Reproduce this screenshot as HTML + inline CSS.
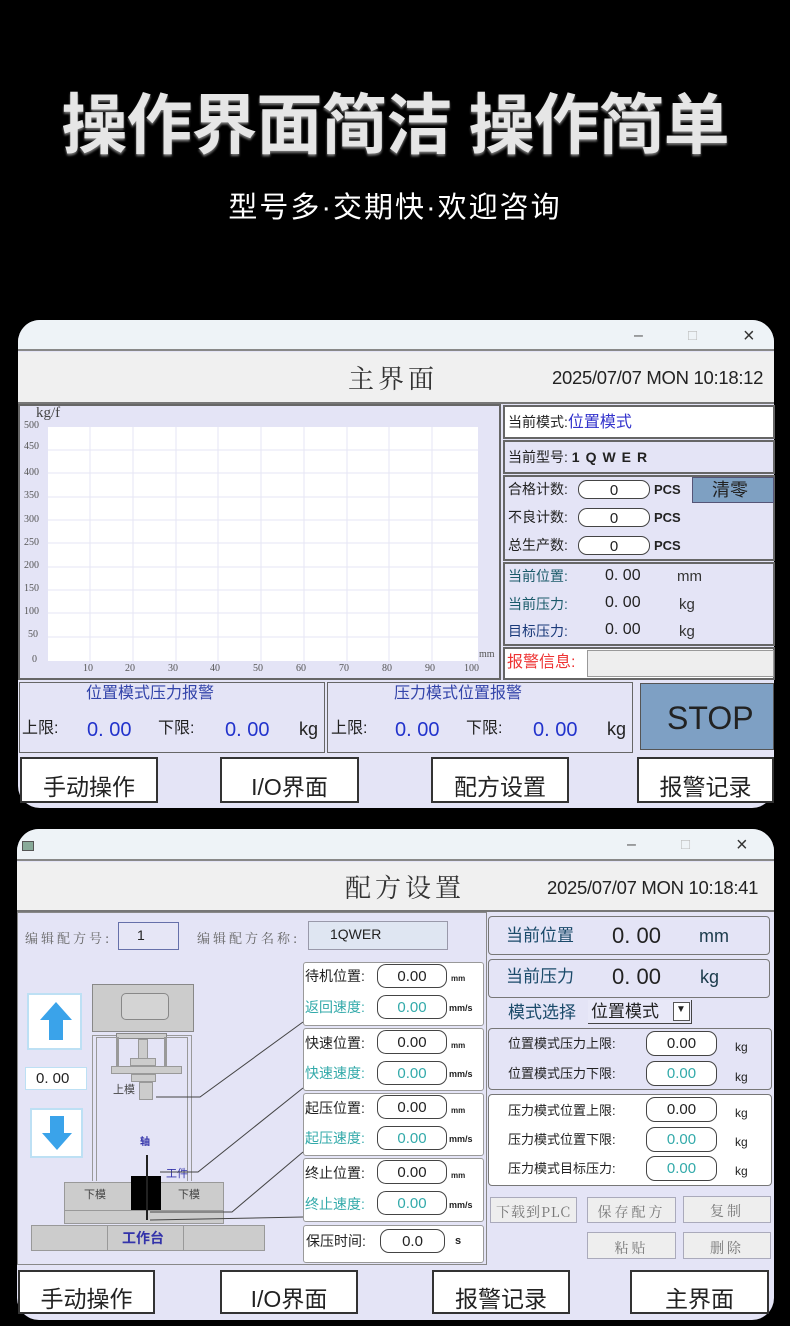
<!DOCTYPE html>
<html><head><meta charset="utf-8"><style>
*{margin:0;padding:0;box-sizing:border-box}
body{width:790px;height:1326px;background:#000;position:relative;overflow:hidden;font-family:"Liberation Sans","Noto Sans CJK SC",sans-serif;color:#222}
.a{position:absolute}
.t{position:absolute;white-space:nowrap;line-height:1}
.box{position:absolute;border:2px solid #666;background:#e4e4f6}
.inp{position:absolute;background:#fff;border:1.5px solid #444;border-radius:9px;text-align:center;font-size:15px;line-height:1}
.btn{position:absolute;background:#fff;border:2px solid #333;text-align:center;font-size:23px}
.gb{position:absolute;background:#eeeeee;border:1.5px solid #aab;text-align:center;font-size:14px;color:#777;font-family:"Noto Serif CJK SC",serif;letter-spacing:3px}
</style></head><body>

<div class="t" style="left:0;width:790px;text-align:center;top:92px;font-size:66px;font-weight:bold;color:#e6e6e6;letter-spacing:-1px;text-shadow:0 2px 2px #777">操作界面简洁 操作简单</div>
<div class="t" style="left:0;width:790px;text-align:center;top:194px;font-size:29px;letter-spacing:2px;color:#fff">型号多·交期快·欢迎咨询</div>

<!-- PANEL 1 -->
<div class="a" style="left:18px;top:320px;width:756px;height:488px;background:#e4e4f6;border-radius:22px 22px 22px 22px;overflow:hidden">
  <div class="a" style="left:0;top:0;width:756px;height:31px;background:#eef3f7;border-bottom:2px solid #888"></div>
  <div class="t" style="left:616px;top:8px;font-size:16px;color:#555">–</div>
  <div class="t" style="left:670px;top:8px;font-size:15px;color:#bbb">□</div>
  <div class="t" style="left:725px;top:6px;font-size:20px;color:#333">×</div>
  <div class="a" style="left:0;top:32px;width:756px;height:52px;background:#f0f0f0;border-bottom:2px solid #777"></div>
  <div class="t" style="left:330px;top:45px;font-size:26px;letter-spacing:4px;font-family:'Noto Serif CJK SC',serif;color:#333">主界面</div>
  <div class="t" style="left:534px;top:49px;font-size:18.5px;letter-spacing:-0.3px;color:#222">2025/07/07 MON 10:18:12</div>
</div>

<!-- chart -->
<div class="box" style="left:18px;top:404px;width:483px;height:276px"></div>
<svg class="a" style="left:48px;top:427px" width="430" height="234">
<rect width="430" height="234" fill="#fff"/>
<g stroke="#e6e6f4" stroke-width="1">
<line x1="42" y1="0" x2="42" y2="234"/><line x1="85" y1="0" x2="85" y2="234"/><line x1="128" y1="0" x2="128" y2="234"/><line x1="170" y1="0" x2="170" y2="234"/><line x1="213" y1="0" x2="213" y2="234"/><line x1="256" y1="0" x2="256" y2="234"/><line x1="299" y1="0" x2="299" y2="234"/><line x1="341" y1="0" x2="341" y2="234"/><line x1="384" y1="0" x2="384" y2="234"/>
<line x1="0" y1="23" x2="430" y2="23"/><line x1="0" y1="46" x2="430" y2="46"/><line x1="0" y1="70" x2="430" y2="70"/><line x1="0" y1="93" x2="430" y2="93"/><line x1="0" y1="116" x2="430" y2="116"/><line x1="0" y1="140" x2="430" y2="140"/><line x1="0" y1="163" x2="430" y2="163"/><line x1="0" y1="186" x2="430" y2="186"/><line x1="0" y1="210" x2="430" y2="210"/>
</g></svg>
<div class="t" style="left:36px;top:406px;font-size:15px;font-family:'Liberation Serif',serif;color:#444">kg/f</div>
<div style="font-family:'Liberation Serif',serif;font-size:10px;color:#555">
<div class="t" style="left:24px;top:421px">500</div><div class="t" style="left:24px;top:442px">450</div><div class="t" style="left:24px;top:468px">400</div><div class="t" style="left:24px;top:491px">350</div><div class="t" style="left:24px;top:515px">300</div><div class="t" style="left:24px;top:538px">250</div><div class="t" style="left:24px;top:561px">200</div><div class="t" style="left:24px;top:584px">150</div><div class="t" style="left:24px;top:607px">100</div><div class="t" style="left:28px;top:630px">50</div><div class="t" style="left:32px;top:655px">0</div>
<div class="t" style="left:83px;top:664px">10</div><div class="t" style="left:125px;top:664px">20</div><div class="t" style="left:168px;top:664px">30</div><div class="t" style="left:210px;top:664px">40</div><div class="t" style="left:253px;top:664px">50</div><div class="t" style="left:296px;top:664px">60</div><div class="t" style="left:339px;top:664px">70</div><div class="t" style="left:382px;top:664px">80</div><div class="t" style="left:425px;top:664px">90</div><div class="t" style="left:464px;top:664px">100</div><div class="t" style="left:479px;top:650px">mm</div>
</div>

<!-- right column p1 -->
<div class="box" style="left:503px;top:405px;width:272px;height:34px;background:#fff"></div>
<div class="t" style="left:508px;top:415px;font-size:14px">当前模式:<span style="color:#3333cc;font-size:16px">位置模式</span></div>
<div class="box" style="left:503px;top:440px;width:272px;height:34px"></div>
<div class="t" style="left:508px;top:450px;font-size:14px">当前型号: <b style="letter-spacing:6px;font-size:14px">1QWER</b></div>
<div class="box" style="left:503px;top:475px;width:272px;height:86px"></div>
<div class="t" style="left:508px;top:482px;font-size:14px">合格计数:</div><div class="inp" style="left:578px;top:480px;width:72px;height:19px;padding-top:2px">0</div><div class="t" style="left:654px;top:483px;font-size:13px;font-weight:bold">PCS</div>
<div class="t" style="left:508px;top:510px;font-size:14px">不良计数:</div><div class="inp" style="left:578px;top:508px;width:72px;height:19px;padding-top:2px">0</div><div class="t" style="left:654px;top:511px;font-size:13px;font-weight:bold">PCS</div>
<div class="t" style="left:508px;top:538px;font-size:14px">总生产数:</div><div class="inp" style="left:578px;top:536px;width:72px;height:19px;padding-top:2px">0</div><div class="t" style="left:654px;top:539px;font-size:13px;font-weight:bold">PCS</div>
<div class="a" style="left:692px;top:477px;width:82px;height:26px;background:#7ea0c2;border:1px solid #557"></div>
<div class="t" style="left:712px;top:481px;font-size:18px">清零</div>
<div class="box" style="left:503px;top:562px;width:272px;height:84px"></div>
<div class="t" style="left:508px;top:569px;font-size:14px;color:#1a5a6a">当前位置:</div><div class="t" style="left:605px;top:568px;font-size:16px">0. 00</div><div class="t" style="left:677px;top:569px;font-size:15px;color:#333">mm</div>
<div class="t" style="left:508px;top:597px;font-size:14px;color:#1a5a6a">当前压力:</div><div class="t" style="left:605px;top:595px;font-size:16px">0. 00</div><div class="t" style="left:679px;top:597px;font-size:15px;color:#333">kg</div>
<div class="t" style="left:508px;top:624px;font-size:14px;color:#1a3a7a">目标压力:</div><div class="t" style="left:605px;top:622px;font-size:16px">0. 00</div><div class="t" style="left:679px;top:624px;font-size:15px;color:#333">kg</div>
<div class="box" style="left:503px;top:647px;width:272px;height:33px;background:#fff"></div>
<div class="t" style="left:507px;top:655px;font-size:16px;color:#e33">报警信息:</div>
<div class="a" style="left:587px;top:650px;width:187px;height:27px;background:#eee;border:1px solid #999"></div>

<!-- alarms -->
<div class="box" style="left:19px;top:682px;width:306px;height:71px;border-width:1.5px"></div>
<div class="t" style="left:86px;top:686px;font-size:16px;color:#3344aa">位置模式压力报警</div>
<div class="t" style="left:22px;top:721px;font-size:16px">上限:</div><div class="t" style="left:87px;top:720px;font-size:20px;color:#2233cc">0. 00</div>
<div class="t" style="left:158px;top:721px;font-size:16px">下限:</div><div class="t" style="left:225px;top:720px;font-size:20px;color:#2233cc">0. 00</div><div class="t" style="left:299px;top:720px;font-size:18px">kg</div>
<div class="box" style="left:327px;top:682px;width:306px;height:71px;border-width:1.5px"></div>
<div class="t" style="left:394px;top:686px;font-size:16px;color:#3344aa">压力模式位置报警</div>
<div class="t" style="left:331px;top:721px;font-size:16px">上限:</div><div class="t" style="left:395px;top:720px;font-size:20px;color:#2233cc">0. 00</div>
<div class="t" style="left:466px;top:721px;font-size:16px">下限:</div><div class="t" style="left:533px;top:720px;font-size:20px;color:#2233cc">0. 00</div><div class="t" style="left:607px;top:720px;font-size:18px">kg</div>
<div class="a" style="left:640px;top:683px;width:134px;height:67px;background:#7ea0c4;border:1px solid #555"></div>
<div class="t" style="left:667px;top:702px;font-size:32px">STOP</div>

<div class="btn" style="left:20px;top:757px;width:138px;height:46px;padding-top:9px">手动操作</div>
<div class="btn" style="left:220px;top:757px;width:139px;height:46px;padding-top:9px">I/O界面</div>
<div class="btn" style="left:431px;top:757px;width:138px;height:46px;padding-top:9px">配方设置</div>
<div class="btn" style="left:637px;top:757px;width:137px;height:46px;padding-top:9px">报警记录</div>

<!-- PANEL 2 -->
<div class="a" style="left:17px;top:829px;width:757px;height:491px;background:#e4e4f6;border-radius:22px;overflow:hidden">
  <div class="a" style="left:0;top:0;width:757px;height:32px;background:#eef3f7;border-bottom:2px solid #888"></div>
  <div class="a" style="left:5px;top:12px;width:12px;height:10px;background:#8a9;border:1px solid #555"></div>
  <div class="t" style="left:610px;top:8px;font-size:16px;color:#555">–</div>
  <div class="t" style="left:664px;top:8px;font-size:15px;color:#bbb">□</div>
  <div class="t" style="left:719px;top:6px;font-size:20px;color:#333">×</div>
  <div class="a" style="left:0;top:33px;width:757px;height:50px;background:#f0f0f0;border-bottom:2px solid #777"></div>
  <div class="t" style="left:328px;top:45px;font-size:26px;letter-spacing:4px;font-family:'Noto Serif CJK SC',serif;color:#333">配方设置</div>
  <div class="t" style="left:530px;top:50px;font-size:18.5px;letter-spacing:-0.3px;color:#222">2025/07/07 MON 10:18:41</div>
</div>
<div class="a" style="left:17px;top:912px;width:470px;height:353px;border:1.5px solid #888"></div>
<div class="t" style="left:25px;top:931px;font-size:13px;color:#666;letter-spacing:3px;font-family:'Noto Serif CJK SC',serif">编辑配方号:</div>
<div class="a" style="left:118px;top:922px;width:61px;height:28px;border:1.5px solid #6670aa;background:#e6e6f6"></div><div class="t" style="left:137px;top:928px;font-size:14px">1</div>
<div class="t" style="left:197px;top:931px;font-size:13px;color:#666;letter-spacing:3px;font-family:'Noto Serif CJK SC',serif">编辑配方名称:</div>
<div class="a" style="left:308px;top:921px;width:140px;height:29px;border:1.5px solid #99a;background:#dfe6f2"></div><div class="t" style="left:330px;top:927px;font-size:14px">1QWER</div>

<!-- machine -->
<div class="a" style="left:27px;top:993px;width:55px;height:57px;background:#fff;border:2px solid #bde0f4"></div>
<svg class="a" style="left:38px;top:1000px" width="36" height="42"><path d="M18 2 L34 20 L25 20 L25 40 L11 40 L11 20 L2 20 Z" fill="#3aa3ea"/></svg>
<div class="a" style="left:25px;top:1067px;width:62px;height:23px;background:#fff;border:1.5px solid #bde0f4"></div><div class="t" style="left:36px;top:1071px;font-size:15px">0. 00</div>
<div class="a" style="left:30px;top:1108px;width:53px;height:50px;background:#fff;border:2px solid #bde0f4"></div>
<svg class="a" style="left:40px;top:1114px" width="34" height="38"><path d="M17 36 L32 19 L24 19 L24 2 L10 2 L10 19 L2 19 Z" fill="#3aa3ea"/></svg>
<div class="a" style="left:92px;top:984px;width:102px;height:48px;background:#ccc;border:1px solid #888"></div>
<div class="a" style="left:121px;top:993px;width:48px;height:27px;background:#d4d4d4;border:1px solid #888;border-radius:5px"></div>
<div class="a" style="left:92px;top:1035px;width:100px;height:146px;border:1px solid #999;border-bottom:none"></div>
<div class="a" style="left:96px;top:1037px;width:92px;height:144px;border:1px solid #999;border-bottom:none"></div>
<div class="a" style="left:116px;top:1033px;width:51px;height:6px;background:#ccc;border:1px solid #888"></div>
<div class="a" style="left:116px;top:1037px;width:3px;height:30px;background:#999"></div>
<div class="a" style="left:164px;top:1037px;width:3px;height:30px;background:#999"></div>
<div class="a" style="left:138px;top:1039px;width:10px;height:20px;background:#ccc;border:1px solid #999"></div>
<div class="a" style="left:130px;top:1058px;width:26px;height:8px;background:#ccc;border:1px solid #999"></div>
<div class="a" style="left:111px;top:1066px;width:71px;height:8px;background:#ccc;border:1px solid #999"></div>
<div class="a" style="left:131px;top:1074px;width:25px;height:8px;background:#ccc;border:1px solid #999"></div>
<div class="a" style="left:139px;top:1082px;width:14px;height:18px;background:#ccc;border:1px solid #999"></div>
<div class="t" style="left:113px;top:1085px;font-size:11px;color:#444">上模</div>
<div class="t" style="left:140px;top:1138px;font-size:10px;color:#33a;font-weight:bold">轴</div>
<div class="t" style="left:166px;top:1169px;font-size:11px;color:#33a">工件</div>
<div class="a" style="left:64px;top:1182px;width:160px;height:42px;background:#ccc;border:1px solid #999"></div>
<div class="a" style="left:64px;top:1210px;width:160px;height:1px;background:#999"></div>
<div class="t" style="left:84px;top:1190px;font-size:11px;color:#444">下模</div>
<div class="t" style="left:178px;top:1190px;font-size:11px;color:#444">下模</div>
<div class="a" style="left:131px;top:1176px;width:30px;height:34px;background:#000"></div>
<div class="a" style="left:146px;top:1155px;width:2px;height:65px;background:#222"></div>
<div class="a" style="left:31px;top:1225px;width:234px;height:26px;background:#ccc;border:1px solid #999"></div>
<div class="a" style="left:107px;top:1225px;width:77px;height:26px;border-left:1px solid #999;border-right:1px solid #999"></div>
<div class="t" style="left:122px;top:1231px;font-size:14px;color:#33a;font-weight:bold">工作台</div>
<svg class="a" style="left:0;top:0" width="790" height="1326">
<g stroke="#444" stroke-width="1" fill="none">
<polyline points="156,1097 200,1097 303,1022"/>
<polyline points="160,1172 198,1172 303,1088"/>
<polyline points="150,1212 232,1212 303,1152"/>
<polyline points="150,1220 303,1217"/>
</g></svg>

<!-- param groups -->
<div style="font-size:14px">
<div class="a" style="left:303px;top:962px;width:181px;height:64px;background:#fff;border:1.5px solid #999;border-radius:3px"></div>
<div class="t" style="left:305px;top:969px">待机位置:</div><div class="inp" style="left:377px;top:964px;width:70px;height:24px;padding-top:4px">0.00</div><div class="t" style="left:451px;top:975px;font-size:8px;font-weight:bold">mm</div>
<div class="t" style="left:305px;top:1000px;color:#3aa">返回速度:</div><div class="inp" style="left:377px;top:995px;width:70px;height:24px;padding-top:4px;color:#3aa">0.00</div><div class="t" style="left:449px;top:1004px;font-size:9px;font-weight:bold">mm/s</div>
<div class="a" style="left:303px;top:1028px;width:181px;height:63px;background:#fff;border:1.5px solid #999;border-radius:3px"></div>
<div class="t" style="left:305px;top:1036px">快速位置:</div><div class="inp" style="left:377px;top:1030px;width:70px;height:24px;padding-top:4px">0.00</div><div class="t" style="left:451px;top:1042px;font-size:8px;font-weight:bold">mm</div>
<div class="t" style="left:305px;top:1066px;color:#3aa">快速速度:</div><div class="inp" style="left:377px;top:1061px;width:70px;height:24px;padding-top:4px;color:#3aa">0.00</div><div class="t" style="left:449px;top:1070px;font-size:9px;font-weight:bold">mm/s</div>
<div class="a" style="left:303px;top:1093px;width:181px;height:63px;background:#fff;border:1.5px solid #999;border-radius:3px"></div>
<div class="t" style="left:305px;top:1101px">起压位置:</div><div class="inp" style="left:377px;top:1095px;width:70px;height:24px;padding-top:4px">0.00</div><div class="t" style="left:451px;top:1107px;font-size:8px;font-weight:bold">mm</div>
<div class="t" style="left:305px;top:1131px;color:#3aa">起压速度:</div><div class="inp" style="left:377px;top:1126px;width:70px;height:24px;padding-top:4px;color:#3aa">0.00</div><div class="t" style="left:449px;top:1135px;font-size:9px;font-weight:bold">mm/s</div>
<div class="a" style="left:303px;top:1158px;width:181px;height:64px;background:#fff;border:1.5px solid #999;border-radius:3px"></div>
<div class="t" style="left:305px;top:1166px">终止位置:</div><div class="inp" style="left:377px;top:1160px;width:70px;height:24px;padding-top:4px">0.00</div><div class="t" style="left:451px;top:1172px;font-size:8px;font-weight:bold">mm</div>
<div class="t" style="left:305px;top:1197px;color:#3aa">终止速度:</div><div class="inp" style="left:377px;top:1191px;width:70px;height:24px;padding-top:4px;color:#3aa">0.00</div><div class="t" style="left:449px;top:1201px;font-size:9px;font-weight:bold">mm/s</div>
<div class="a" style="left:303px;top:1225px;width:181px;height:38px;background:#fff;border:1.5px solid #999;border-radius:3px"></div>
<div class="t" style="left:306px;top:1234px">保压时间:</div><div class="inp" style="left:380px;top:1229px;width:65px;height:24px;padding-top:4px">0.0</div><div class="t" style="left:455px;top:1236px;font-size:11px;font-weight:bold">s</div>
</div>

<!-- right p2 -->
<div class="a" style="left:488px;top:916px;width:282px;height:39px;border:1.5px solid #777;border-radius:4px;background:#e4e4f6"></div>
<div class="t" style="left:506px;top:927px;font-size:17px;color:#1a4a6a">当前位置</div><div class="t" style="left:612px;top:925px;font-size:22px">0. 00</div><div class="t" style="left:699px;top:927px;font-size:18px;color:#1a3a4a">mm</div>
<div class="a" style="left:488px;top:959px;width:282px;height:39px;border:1.5px solid #777;border-radius:4px;background:#e4e4f6"></div>
<div class="t" style="left:506px;top:968px;font-size:17px;color:#1a4a6a">当前压力</div><div class="t" style="left:612px;top:966px;font-size:22px">0. 00</div><div class="t" style="left:700px;top:968px;font-size:18px;color:#1a3a4a">kg</div>
<div class="t" style="left:508px;top:1004px;font-size:17px;color:#1a4a6a">模式选择</div>
<div class="a" style="left:588px;top:1000px;width:104px;height:24px;background:#e8e8f8;border-bottom:1.5px solid #444;border-right:1.5px solid #444"></div>
<div class="t" style="left:591px;top:1003px;font-size:17px">位置模式</div>
<div class="a" style="left:673px;top:1002px;width:17px;height:19px;background:#fff;border:1px solid #555"></div>
<div class="t" style="left:676px;top:1005px;font-size:10px">▼</div>
<div class="a" style="left:488px;top:1028px;width:284px;height:62px;border:1.5px solid #777;border-radius:4px;background:#e4e4f6"></div>
<div class="t" style="left:508px;top:1037px;font-size:13px">位置模式压力上限:</div><div class="inp" style="left:646px;top:1031px;width:71px;height:25px;padding-top:4px">0.00</div><div class="t" style="left:735px;top:1041px;font-size:12px">kg</div>
<div class="t" style="left:508px;top:1067px;font-size:13px">位置模式压力下限:</div><div class="inp" style="left:646px;top:1061px;width:71px;height:25px;padding-top:4px;color:#3aa">0.00</div><div class="t" style="left:735px;top:1071px;font-size:12px">kg</div>
<div class="a" style="left:488px;top:1094px;width:284px;height:92px;border:1.5px solid #777;border-radius:4px;background:#fff"></div>
<div class="t" style="left:508px;top:1104px;font-size:13px">压力模式位置上限:</div><div class="inp" style="left:646px;top:1097px;width:71px;height:25px;padding-top:4px">0.00</div><div class="t" style="left:735px;top:1107px;font-size:12px">kg</div>
<div class="t" style="left:508px;top:1133px;font-size:13px">压力模式位置下限:</div><div class="inp" style="left:646px;top:1127px;width:71px;height:25px;padding-top:4px;color:#3aa">0.00</div><div class="t" style="left:735px;top:1136px;font-size:12px">kg</div>
<div class="t" style="left:508px;top:1162px;font-size:13px">压力模式目标压力:</div><div class="inp" style="left:646px;top:1156px;width:71px;height:25px;padding-top:4px;color:#3aa">0.00</div><div class="t" style="left:735px;top:1165px;font-size:12px">kg</div>
<div class="gb" style="left:490px;top:1197px;width:87px;height:26px;padding-top:4px;letter-spacing:1px">下载到PLC</div>
<div class="gb" style="left:587px;top:1197px;width:89px;height:26px;padding-top:4px">保存配方</div>
<div class="gb" style="left:683px;top:1196px;width:88px;height:27px;padding-top:4px">复制</div>
<div class="gb" style="left:587px;top:1232px;width:89px;height:27px;padding-top:5px">粘贴</div>
<div class="gb" style="left:683px;top:1232px;width:88px;height:27px;padding-top:5px">删除</div>

<div class="btn" style="left:18px;top:1270px;width:137px;height:44px;padding-top:8px">手动操作</div>
<div class="btn" style="left:220px;top:1270px;width:138px;height:44px;padding-top:8px">I/O界面</div>
<div class="btn" style="left:432px;top:1270px;width:138px;height:44px;padding-top:8px">报警记录</div>
<div class="btn" style="left:630px;top:1270px;width:139px;height:44px;padding-top:8px">主界面</div>
</body></html>
